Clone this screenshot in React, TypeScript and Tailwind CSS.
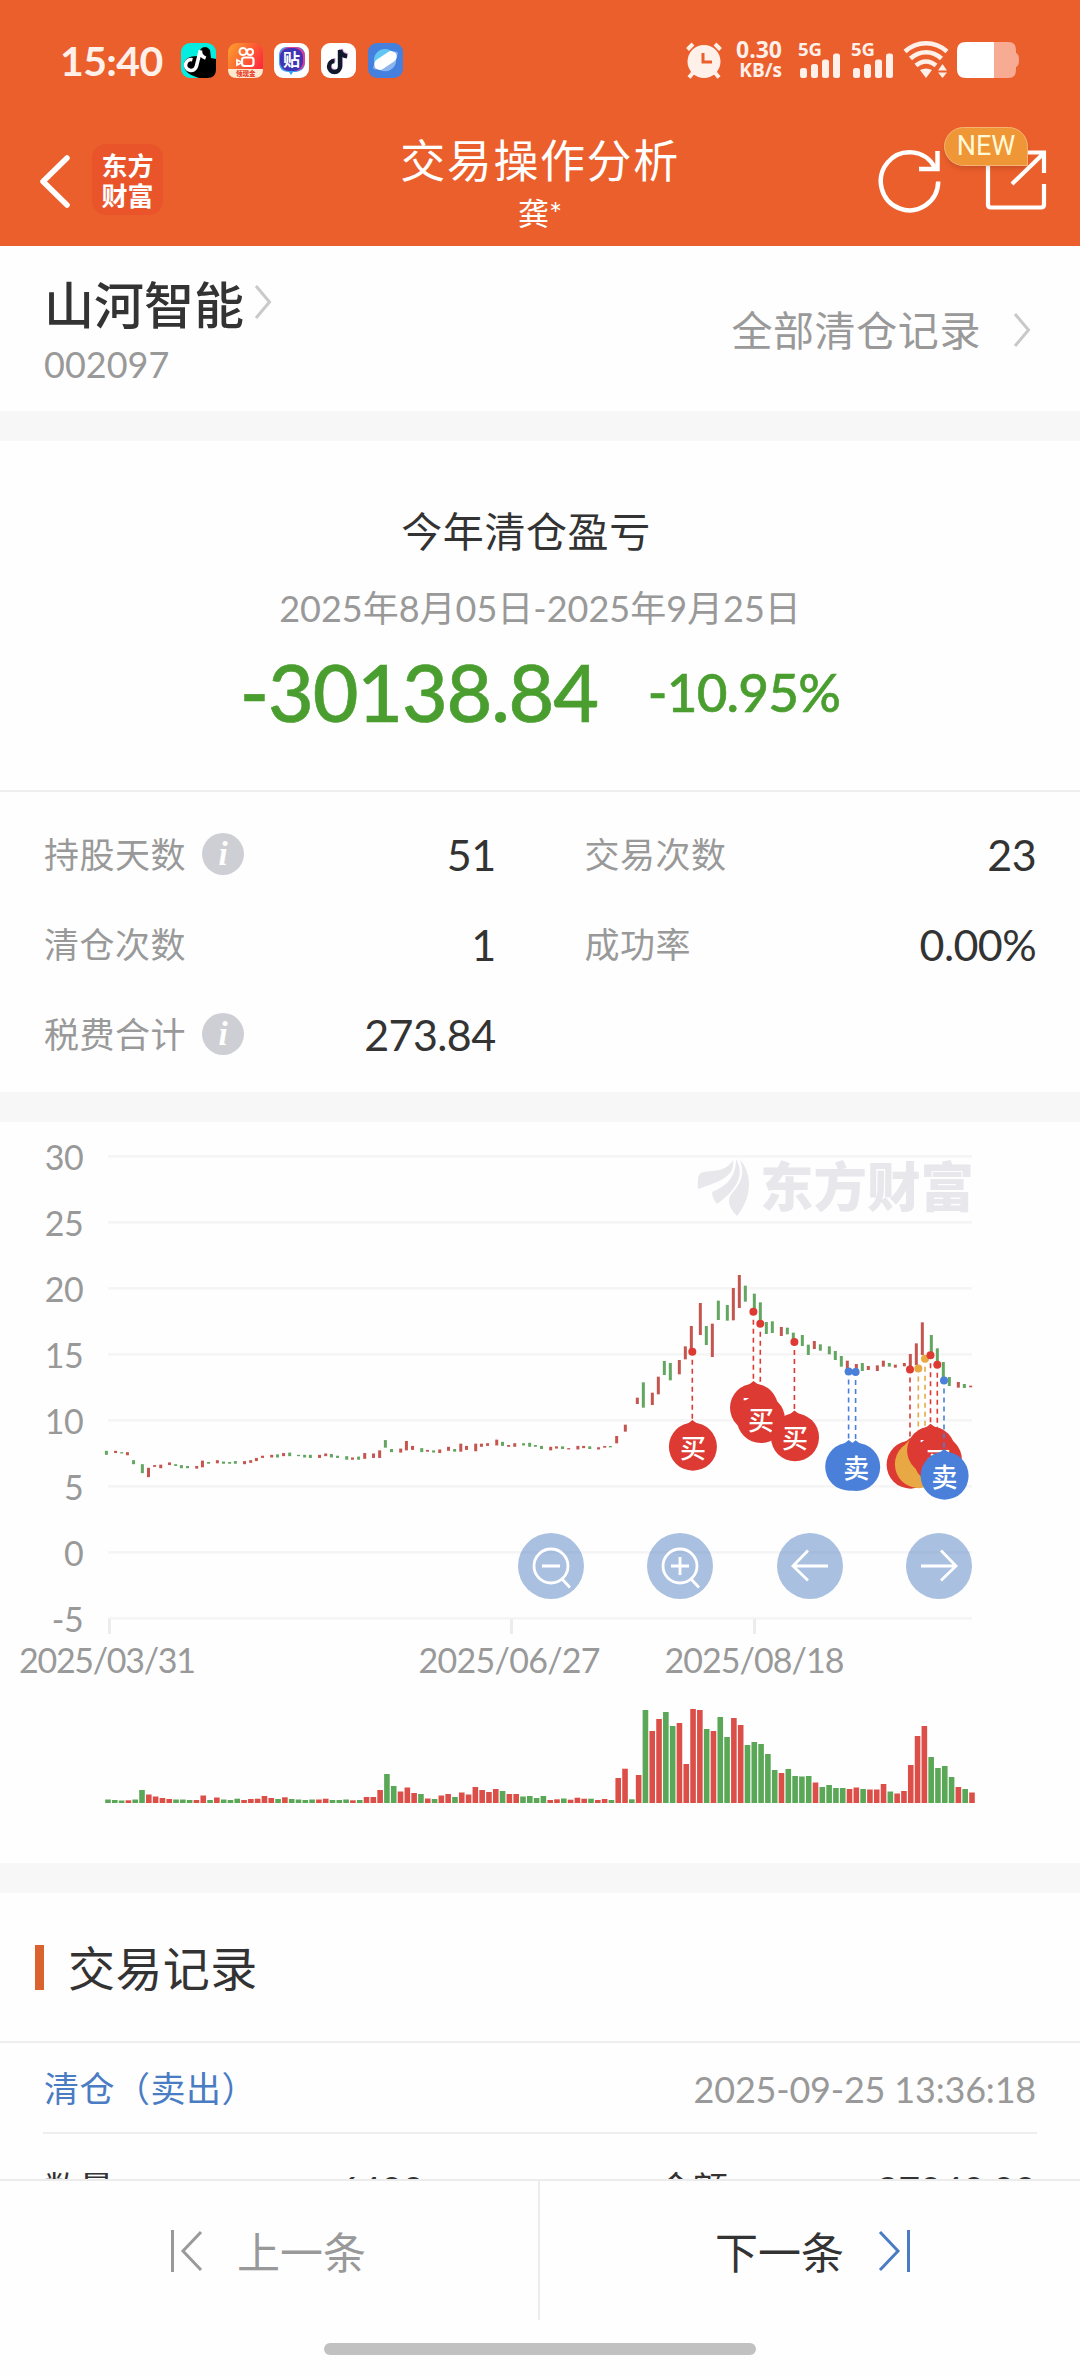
import { ReactNode } from "react";

type Tone = "R" | "G";

// volume bars, oldest first
const volumes =
  "G3.5 G3 G2.5 R2.7 G3.5 G13 R8.5 R6.5 R5 R4 G3.5 G3.5 G3 R3 R7.5 G3 R5.5 G3.5 G3 G4.3 R3 R4 R4.3 R7 R5 G4 R5.7 G4 G3.5 G3 G3.5 R3.5 R4.3 G3 G3 G3.5 R2.7 G3 R6 R6 R13 G29 G17 R11.5 R15.5 R10 G9 R4.5 G4 R7.5 R9 G6 R10.5 R8.5 R16 R13 R11 R14 G12 R9 R9 G6.5 G7 G5 G7 R3 R3.7 G4.5 R3.3 R5.3 R4.3 G4.3 R3 R4 G3 R25 R34.3 G3.7 R28 G93 R72 R84 G91 G77 R80 R39 R94 R93 G74 R72 G86 G66 R85 R78 G58 G61 G59 G49 G33 R30 G34 G27 G26.5 G27 R20.5 G16 G18 G15 G15 R14 R15.5 G14 R13.5 R13.5 R19 G11.5 R9.5 R12 R38 R67 R77 G46 G35 G37 G26 R16 G14 R10.5"
    .split(" ")
    .map((v) => ({ tone: v[0] as Tone, h: Number(v.slice(1)) }));

// [tone, x, top, bottom]
const quiet: [Tone, number, number, number][] = [
  ["G", 278, 741, 750], ["R", 302, 741, 746], ["G", 318, 744, 747], ["R", 333, 744, 751],
  ["G", 349, 762, 771], ["G", 372, 771, 791], ["R", 388, 779, 800], ["R", 404, 773, 777],
  ["R", 420, 772, 780], ["R", 443, 767, 773], ["G", 459, 771, 775], ["G", 474, 773, 780],
  ["G", 490, 775, 780], ["R", 514, 775, 781], ["R", 529, 763, 778], ["G", 545, 766, 770],
  ["R", 568, 762, 769], ["G", 584, 765, 770], ["G", 600, 766, 770], ["G", 615, 764, 770],
  ["R", 639, 764, 771], ["R", 655, 762, 768], ["R", 670, 757, 764], ["R", 686, 752, 757],
  ["R", 710, 750, 756], ["G", 725, 749, 756], ["R", 741, 746, 753], ["G", 757, 745, 753],
  ["G", 780, 750, 753], ["G", 796, 750, 756], ["G", 811, 750, 757], ["R", 835, 750, 757],
  ["R", 851, 747, 753], ["G", 866, 748, 756], ["G", 882, 752, 757], ["G", 906, 753, 761],
  ["R", 921, 756, 761], ["G", 937, 754, 761], ["R", 953, 746, 759], ["R", 976, 747, 757],
  ["R", 992, 740, 757], ["G", 1007, 717, 734], ["G", 1023, 737, 744], ["R", 1047, 736, 745],
  ["R", 1062, 719, 740], ["R", 1078, 730, 739], ["G", 1102, 735, 744], ["R", 1117, 739, 743],
  ["G", 1133, 740, 745], ["R", 1149, 738, 746], ["R", 1172, 732, 741], ["G", 1188, 737, 743],
  ["R", 1204, 725, 743], ["R", 1219, 730, 739], ["R", 1243, 725, 742], ["R", 1258, 725, 732],
  ["R", 1274, 724, 730], ["R", 1298, 716, 729], ["G", 1313, 721, 730], ["R", 1329, 728, 732],
  ["R", 1345, 724, 732], ["G", 1368, 724, 729], ["G", 1384, 723, 732], ["G", 1399, 728, 732],
  ["G", 1415, 730, 737], ["R", 1439, 732, 740], ["R", 1454, 731, 736], ["G", 1470, 731, 737],
  ["R", 1486, 735, 738], ["R", 1510, 730, 738], ["R", 1525, 730, 735], ["G", 1541, 731, 737],
  ["R", 1564, 733, 738],
];

const busy: [Tone, number, number, number][] = [
  ["R", 14, 978, 983], ["G", 31, 978, 982], ["R", 50, 948, 970], ["R", 76, 914, 935],
  ["R", 112, 833, 852], ["G", 130, 787, 863], ["R", 157, 818, 855], ["R", 175, 770, 823],
  ["G", 193, 723, 765], ["G", 211, 729, 781], ["R", 238, 720, 763], ["R", 256, 679, 718],
  ["R", 274, 618, 690], ["R", 301, 549, 645], ["G", 319, 618, 675], ["R", 337, 611, 711],
  ["G", 355, 542, 600], ["G", 382, 555, 602], ["R", 400, 504, 601], ["R", 418, 465, 564],
  ["G", 436, 497, 545], ["G", 463, 521, 570], ["G", 481, 547, 605], ["G", 499, 606, 642],
  ["G", 517, 604, 639], ["R", 544, 621, 648], ["G", 562, 623, 643], ["G", 580, 638, 660],
  ["G", 607, 645, 678], ["G", 625, 674, 705], ["R", 643, 663, 687], ["G", 661, 673, 692],
  ["G", 688, 679, 703], ["G", 706, 693, 720], ["G", 724, 708, 740], ["R", 742, 722, 745],
  ["R", 769, 732, 748], ["G", 787, 729, 753], ["R", 805, 738, 750], ["R", 832, 736, 753],
  ["R", 850, 722, 740], ["G", 868, 729, 740], ["R", 886, 734, 743], ["R", 913, 729, 739],
  ["R", 931, 702, 740], ["R", 949, 670, 735], ["R", 967, 607, 705], ["G", 994, 645, 700],
  ["G", 1012, 685, 735], ["G", 1030, 726, 780], ["G", 1048, 771, 798], ["R", 1075, 786, 803],
  ["G", 1093, 792, 804], ["R", 1112, 797, 802],
];

const candles = [
  ...quiet.map(([tone, x, t, b]) => ({ tone, x: x / 2.613, y: 1120 + t / 2.24, h: (b - t) / 2.24 })),
  ...busy.map(([tone, x, t, b]) => ({ tone, x: 600 + x / 3, y: 1120 + t / 3, h: (b - t) / 3 })),
];

const pins = [
  { x: 692.3, dot: 1351.7, tip: 1420, color: "#dc3a32", text: "买" },
  { x: 753.4, dot: 1311.8, tip: 1381, color: "#dc3a32", text: "买" },
  { x: 760.3, dot: 1323.8, tip: 1392.3, color: "#dc3a32", text: "买" },
  { x: 794.4, dot: 1342, tip: 1410.6, color: "#dc3a32", text: "买" },
  { x: 848.6, dot: 1371.4, tip: 1440, color: "#4a80d9", text: "" },
  { x: 855.6, dot: 1372, tip: 1440.3, color: "#4a80d9", text: "卖" },
  { x: 910, dot: 1369.4, tip: 1438, color: "#dc3a32", text: "" },
  { x: 918.3, dot: 1368.4, tip: 1437.5, color: "#e8a844", text: "" },
  { x: 925, dot: 1358.8, tip: 1431, color: "#e8a844", text: "" },
  { x: 930.5, dot: 1355.3, tip: 1423.7, color: "#dc3a32", text: "买" },
  { x: 937.3, dot: 1364.8, tip: 1433, color: "#dc3a32", text: "买" },
  { x: 944, dot: 1380.4, tip: 1449, color: "#4a80d9", text: "卖" },
];

const Band = () => <div className="h-[30px] shrink-0 bg-[#f7f7f7]" />;

const Chevron = ({ className }: { className?: string }) => (
  <svg width="20" height="36" viewBox="0 0 20 36" fill="none" className={className}>
    <path d="M3 2L16.500 18L3 34" stroke="#c9c9c9" strokeWidth="3" />
  </svg>
);

const Signal = () => (
  <svg width="44" height="54" viewBox="0 -8 44 54" fill="#fff0ea">
    <text x="0" y="14.500" fontSize="18.500" fontWeight="700" fontFamily="Open Sans, sans-serif">
      5G
    </text>
    <rect x="2" y="27" width="7" height="10" rx="2.500" />
    <rect x="13" y="23" width="7" height="14" rx="2.500" />
    <rect x="24" y="18.500" width="7" height="18.500" rx="2.500" />
    <rect x="35" y="12.500" width="7" height="24.500" rx="2.500" />
  </svg>
);

const note = "M17 7v16.500a5.500 5.500 0 1 1-5.500-5.500M17 7c.8 4 3.500 6 7 6.300";

const StatusBar = () => (
  <div className="flex h-[120px] items-center pl-[60px] pr-[60px] text-[#fff0ea]">
    <span className="w-[121px] text-[41px] font-bold leading-none tracking-[-0.6px]">15:40</span>
    <div className="flex gap-[11.7px]">
      <svg width="35" height="35" viewBox="0 0 35 35" fill="none">
        <rect width="35" height="35" rx="9" fill="#05ece0" />
        <path d="M3 22c0-6 5-9 14-9 1-9 8-12 12-6l1 8 5 1v10c0 6-3 9-9 9H18C8 32 3 28 3 22Z" fill="#000" />
        <g transform="rotate(14 17 17)">
          <path d={note} stroke="#fff" strokeWidth="3.600" />
        </g>
      </svg>
      <svg width="35" height="35" viewBox="0 0 35 35" fill="none">
        <defs>
          <linearGradient id="ks" x1="0" y1="0" x2="1" y2="0.600">
            <stop offset="0" stopColor="#fca32c" />
            <stop offset="1" stopColor="#fd2b3c" />
          </linearGradient>
        </defs>
        <rect width="35" height="35" rx="9" fill="url(#ks)" />
        <path d="M0 26h35c0 6-3 9-9 9H9c-6 0-9-3-9-9Z" fill="#ffe9cf" />
        <circle cx="15" cy="8.500" r="3.500" stroke="#fff" strokeWidth="2" />
        <circle cx="22" cy="9" r="3" stroke="#fff" strokeWidth="2" />
        <rect x="14" y="14.500" width="11.500" height="8.500" rx="2.500" stroke="#fff" strokeWidth="2.200" />
        <path d="M13 19l-4-2v5l4-2" stroke="#fff" strokeWidth="1.800" />
        <text x="8" y="33" fontSize="6.500" fontWeight="900" fill="#e8402c" fontFamily="Noto Sans CJK SC, sans-serif">
          领现金
        </text>
      </svg>
      <svg width="35" height="35" viewBox="0 0 35 35">
        <rect width="35" height="35" rx="9" fill="#fff" />
        <path d="M13 4h9c6 0 9 3 9 9v6c0 6-3 9-9 10h-3l-2 3-2-3c-7 0-10-4-10-10v-6c0-6 3-9 8-9Z" fill="#38a2f5" />
        <rect x="6" y="4" width="25" height="24" rx="9" fill="#e23b93" />
        <rect x="6" y="5" width="23" height="23" rx="9" fill="#3d35b4" />
        <text x="17.500" y="22.500" fontSize="17" textAnchor="middle" fontWeight="700" fill="#fff" fontFamily="Noto Sans CJK SC, sans-serif">
          贴
        </text>
      </svg>
      <svg width="35" height="35" viewBox="0 0 35 35" fill="none">
        <rect width="35" height="35" rx="9" fill="#fff" />
        <path d={note} stroke="#d9a6dd" strokeWidth="4" transform="translate(3 -1)" />
        <path d={note} stroke="#12182c" strokeWidth="4.400" transform="translate(2 0)" />
      </svg>
      <svg width="35" height="35" viewBox="0 0 35 35">
        <rect width="35" height="35" rx="9" fill="#4580df" />
        <circle cx="17" cy="17" r="11" fill="#62c6f5" />
        <path d="M7 22a11 11 0 0 0 20-10Z" fill="#8eb4f0" />
        <ellipse cx="17.500" cy="17.500" rx="14.500" ry="4.500" transform="rotate(-34 17.500 17.500)" fill="#8eb4f0" />
        <rect x="5" y="12" width="25" height="11" rx="5.500" transform="rotate(-34 17.500 17.500)" fill="#fff" />
      </svg>
    </div>
    <div className="ml-auto flex items-center">
      <svg width="38" height="38" viewBox="0 0 38 38" fill="none" stroke="#fff0ea">
        <circle cx="19" cy="20.500" r="16.500" fill="#fff0ea" stroke="none" />
        <path d="M2.500 8.500L8 3M35.500 8.500L30 3M4 36.500l5-6M34 36.500l-5-6" strokeWidth="4" />
        <path d="M18 12v9h9" stroke="#eb5f2c" strokeWidth="3" />
      </svg>
      <div className="ml-[12px] flex w-[47px] flex-col items-end font-['Open_Sans'] font-bold">
        <span className="text-[23px] leading-[21px]">0.30</span>
        <span className="text-[19px] leading-[21px]">KB/s</span>
      </div>
      <div className="ml-[16px] flex gap-[9px]">
        <Signal />
        <Signal />
      </div>
      <svg width="46" height="38" viewBox="0 0 46 38" fill="none" className="ml-[8px]" stroke="#fff0ea" strokeWidth="4.500">
        <path d="M2 10.500C14-.5 32-.5 44 10.500M7.500 17.500c9-8.500 22-8.500 31 0M13 24.500c6-5.500 14-5.500 20 0" />
        <path d="M17 29c4-2 8-2 12 0l-6 8Z" fill="#fff0ea" stroke="none" />
        <path d="M39.500 23l4.500 6.500h-9ZM39.500 37l4.500-5.500h-9Z" fill="#fff0ea" stroke="none" />
      </svg>
      <svg width="64" height="38" viewBox="0 0 64 38" className="ml-[7px]">
        <path d="M38 1h14c6 0 8 3 8 9v2q3 1 3 7t-3 7v2c0 6-2 9-8 9H38Z" fill="#f8ab93" />
        <path d="M38 1H10C4 1 1 4 1 10v18c0 6 3 9 9 9h28Z" fill="#fff" />
      </svg>
    </div>
  </div>
);

const Header = () => (
  <header className="h-[246px] shrink-0 bg-[#eb5f2c] text-white">
    <StatusBar />
    <div className="relative flex h-[126px] justify-between pl-[33px] pr-[32px]">
      <div className="flex items-start pt-[24px]">
        <svg width="40" height="70" viewBox="0 0 40 70" fill="none">
          <path d="M34 14L10 37.500L34 61" stroke="#fff" strokeWidth="5.500" strokeLinecap="round" strokeLinejoin="round" />
        </svg>
        <div className="ml-[19px] flex h-[71px] w-[71px] flex-col items-center justify-center gap-[4px] rounded-[14px] bg-[#e9542a] font-['Noto_Sans_CJK_SC'] text-[26px] font-bold leading-[26px]">
          <span>东方</span>
          <span>财富</span>
        </div>
      </div>
      <div className="absolute left-1/2 top-0 flex -translate-x-1/2 flex-col items-center">
        <h1 className="mt-[14px] text-[45px] leading-[54px] tracking-[1.6px]">交易操作分析</h1>
        <p className="mt-[6px] text-[31px] leading-[38px]">龚*</p>
      </div>
      <div className="relative flex items-start">
        <svg width="170" height="100" viewBox="877 120 170 100" fill="none" stroke="#fff" strokeWidth="4.500">
          <path d="M937.200 181.500A28.700 29 0 1 1 933.500 167" />
          <path d="M936.500 151v18H918" />
          <path d="M1027 152.500h16V173M1042 154L1011 184M987 160v44.500q0 3 3 3h50q3 0 3-3V184" strokeWidth="4.200" />
        </svg>
        <span className="absolute left-[66px] top-[7px] flex h-[39px] w-[84px] items-center justify-center rounded-full rounded-br-none border border-[#f6b474] bg-[#ef9636] font-['Roboto'] text-[27px] leading-none text-[#fff8d5] shadow-md">
          NEW
        </span>
      </div>
    </div>
  </header>
);

const InfoIcon = () => (
  <svg width="42" height="42" viewBox="0 0 42 42" className="ml-[16px]">
    <circle cx="21" cy="21" r="21" fill="#cecfd4" />
    <text x="21" y="32" fontSize="33" fontWeight="700" fontStyle="italic" textAnchor="middle" fill="#fff" fontFamily="Liberation Serif, serif">
      i
    </text>
  </svg>
);

const Stat = ({ label, value, info }: { label: string; value: string; info?: boolean }) => (
  <div className="flex h-[90px] items-center">
    <span className="text-[35px] leading-none tracking-[0.5px] text-[#999]">{label}</span>
    {info && <InfoIcon />}
    <span className="ml-auto text-[43px] leading-none tracking-[-0.6px]">{value}</span>
  </div>
);

const Control = ({ x, children }: { x: number; children: ReactNode }) => (
  <g transform={`translate(${x} 1566)`} fill="none" stroke="#fff" strokeWidth="2.800">
    <circle r="33" fill="#5581c1" fillOpacity="0.5" stroke="none" />
    {children}
  </g>
);

const dates: [string, number, number][] = [
  ["2025/03/31", 107.5, 177],
  ["2025/06/27", 509.5, 182],
  ["2025/08/18", 754.5, 180],
];

const Chart = () => (
  <svg width="1080" height="741" viewBox="0 1122 1080 741" className="block shrink-0">
    {[30, 25, 20, 15, 10, 5, 0, -5].map((v, i) => (
      <g key={v}>
        <rect x="108" y={1155 + i * 66} width="864" height="2.700" fill="#f5f5f5" />
        <text x="83.500" y={1169.5 + i * 66} textAnchor="end" fontSize="34" letterSpacing="-0.3" fill="#999" fontFamily="Lato, sans-serif">
          {v}
        </text>
      </g>
    ))}
    {[109.5, 511.5, 754.5].map((x) => (
      <rect key={x} x={x - 1.5} y="1619" width="3" height="15" fill="#ececec" />
    ))}
    {dates.map(([d, x, w]) => (
      <text key={d} x={x} y="1672.500" textAnchor="middle" fontSize="34" fill="#999" fontFamily="Lato, sans-serif" textLength={w}>
        {d}
      </text>
    ))}

    {/* watermark */}
    <g fill="#e8e7ec">
      <path d="M698 1189C697 1171 700 1172 713 1171C723 1170 730 1166 733 1160C735 1176 722 1181 698 1189Z" />
      <path d="M712 1192C726 1186 736 1178 736 1159C746 1176 735 1191 717 1204Q712 1198 712 1192Z" />
      <path d="M740 1160C751 1171 754 1195 737 1216Q726 1205 730 1196C744 1180 744 1172 740 1160Z" />
      <text x="760" y="1207" fontSize="53.500" fontWeight="900" fontFamily="Noto Sans CJK SC, sans-serif">
        东方财富
      </text>
    </g>

    {candles.map((c, i) => (
      <rect key={i} x={c.x - 1.5} y={c.y} width="3" height={c.h} fill={c.tone === "R" ? "#c4564f" : "#63a661"} />
    ))}

    {pins.map((p) => (
      <g key={p.x}>
        <line x1={p.x} x2={p.x} y1={p.dot + 8} y2={p.tip} stroke={p.color} strokeWidth="1.600" strokeDasharray="5 4" />
        <circle cx={p.x} cy={p.dot} r="4" fill={p.color} />
        <g transform={`translate(${p.x} ${p.tip})`}>
          <path d="M0 0Q6 5 16 9H-15Q-5 5 0 0Z" fill={p.color} />
          <circle cx="0.600" cy="26.700" r="24" fill={p.color} />
          {p.text && (
            <text x="0.600" y="37.500" fontSize="26" fontWeight="500" textAnchor="middle" fill="#fff" fontFamily="Noto Sans CJK SC, sans-serif">
              {p.text}
            </text>
          )}
        </g>
      </g>
    ))}

    <Control x={551}>
      <circle r="17" />
      <path d="M-9 0H9M11 13L19 21.500" />
    </Control>
    <Control x={680}>
      <circle r="17" />
      <path d="M-9 0H9M0 -9V9M11 13L19 21.500" />
    </Control>
    <Control x={810}>
      <path d="M18 0H-17M-2 -15.500L-17 0L-2 14.500" />
    </Control>
    <Control x={939}>
      <path d="M-18 0H17M2 -15.500L17 0L2 14.500" />
    </Control>

    {volumes.map((v, i) => (
      <rect key={i} x={105.2 + i * 6.803} y={1803 - v.h} width="5.600" height={v.h} fill={v.tone === "R" ? "#dc4f48" : "#5aa857"} />
    ))}
  </svg>
);

export default function App() {
  return (
    <div className="flex h-[2376px] w-[1080px] flex-col overflow-hidden bg-[#fefefe] font-['Lato','Noto_Sans_CJK_SC',sans-serif] text-[#333]">
      <Header />

      <section className="flex h-[165px] shrink-0 items-center justify-between pl-[44px] pr-[48px] pt-[3px]">
        <div>
          <div className="flex items-center">
            <h2 className="text-[50px] font-medium leading-[56px]">山河智能</h2>
            <Chevron className="mb-[5px] ml-[9px]" />
          </div>
          <p className="mt-[11px] text-[36px] leading-[40px] text-[#999]">002097</p>
        </div>
        <div className="flex items-center text-[#999]">
          <span className="text-[41px] leading-none tracking-[0.6px]">全部清仓记录</span>
          <Chevron className="ml-[31px]" />
        </div>
      </section>
      <Band />

      <section className="flex h-[351px] shrink-0 flex-col items-center border-b-2 border-[#eee] pt-[65px]">
        <h3 className="mr-[28px] text-[41px] leading-[52px] tracking-[0.6px]">今年清仓盈亏</h3>
        <p className="mt-[28px] text-[36px] leading-[44px] text-[#999]">2025年8月05日-2025年9月25日</p>
        <div className="mt-[22px] flex items-center gap-[50px] font-medium leading-none text-[#4a9e2f] [-webkit-text-stroke:0.6px_#4a9e2f]">
          <span className="text-[79px] tracking-[-1.2px]">-30138.84</span>
          <span className="text-[53px] tracking-[-0.8px]">-10.95%</span>
        </div>
      </section>

      <section className="grid h-[300px] shrink-0 grid-cols-2 content-start gap-x-[89px] pl-[44px] pr-[44px] pt-[17px]">
        <Stat label="持股天数" value="51" info />
        <Stat label="交易次数" value="23" />
        <Stat label="清仓次数" value="1" />
        <Stat label="成功率" value="0.00%" />
        <Stat label="税费合计" value="273.84" info />
      </section>
      <Band />

      <Chart />
      <Band />

      <section className="flex h-[286px] shrink-0 flex-col overflow-hidden">
        <div className="flex h-[150px] shrink-0 items-center border-b-2 border-[#eee] pl-[35px]">
          <i className="h-[45px] w-[9px] bg-[#d9622e]" />
          <h3 className="ml-[24px] mt-[3px] text-[47px] leading-none tracking-[0.4px]">交易记录</h3>
        </div>
        <div className="mx-[43px] flex h-[91px] shrink-0 items-center justify-between border-b-2 border-[#eee] px-[1px] pt-[2px]">
          <span className="text-[35px] leading-none tracking-[0.5px] text-[#4a7cc4]">清仓（卖出）</span>
          <span className="text-[36px] leading-none tracking-[-0.2px] text-[#999]">2025-09-25 13:36:18</span>
        </div>
        <div className="mx-[44px] flex h-[108px] shrink-0 items-center text-[35px] leading-none">
          <span className="w-[200px]">数量</span>
          <span className="w-[180px] text-right text-[37px]">6400</span>
          <span className="ml-[234px]">金额</span>
          <span className="ml-auto text-[37px]">87040.00</span>
        </div>
      </section>

      <footer className="flex h-[197px] shrink-0 flex-col border-t-2 border-[#ececec]">
        <div className="grid h-[139px] grid-cols-2 text-[43px] leading-none">
          <div className="flex items-center border-r-2 border-[#ececec] pl-[169px] text-[#999]">
            <svg width="34" height="44" viewBox="0 0 34 44" fill="none" stroke="#999" strokeWidth="3">
              <path d="M3.500 1v42M32 3L14 22L32 41" />
            </svg>
            <span className="ml-[34px] mt-[3px]">上一条</span>
          </div>
          <div className="flex items-center pl-[175px]">
            <span className="mt-[3px]">下一条</span>
            <svg width="34" height="44" viewBox="0 0 34 44" fill="none" stroke="#4a7cc4" strokeWidth="3" className="ml-[34px]">
              <path d="M30.500 1v42M2 3L20 22L2 41" />
            </svg>
          </div>
        </div>
        <div className="mx-auto mt-[23px] h-[12px] w-[432px] rounded-full bg-[#c1c1c1]" />
      </footer>
    </div>
  );
}
